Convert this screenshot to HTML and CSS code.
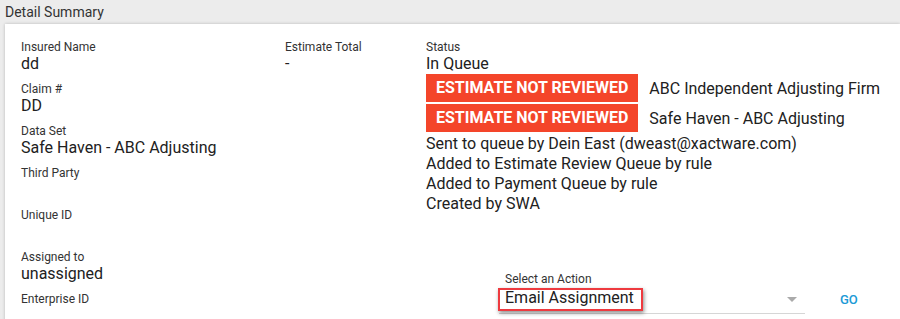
FILE: index.html
```html
<!DOCTYPE html>
<html>
<head>
<meta charset="utf-8">
<link rel="stylesheet" href="styles.css">
</head>
<body>
<div class="page">
  <div class="title">Detail Summary</div>
  <div class="card">
    <div class="col col-left">
      <div class="field"><div class="label">Insured Name</div><div class="value">dd</div></div>
      <div class="field"><div class="label">Claim #</div><div class="value">DD</div></div>
      <div class="field"><div class="label">Data Set</div><div class="value">Safe Haven - ABC Adjusting</div></div>
      <div class="field"><div class="label">Third Party</div><div class="value"></div></div>
      <div class="field"><div class="label">Unique ID</div><div class="value"></div></div>
      <div class="field"><div class="label">Assigned to</div><div class="value">unassigned</div></div>
      <div class="field"><div class="label">Enterprise ID</div><div class="value"></div></div>
    </div>
    <div class="col col-mid">
      <div class="field"><div class="label">Estimate Total</div><div class="value">-</div></div>
    </div>
    <div class="col col-right">
      <div class="field status">
        <div class="label">Status</div>
        <div class="value">In Queue</div>
        <div class="badge-row"><span class="badge">ESTIMATE NOT REVIEWED</span><span class="badge-text">ABC Independent Adjusting Firm</span></div>
        <div class="badge-row"><span class="badge">ESTIMATE NOT REVIEWED</span><span class="badge-text">Safe Haven - ABC Adjusting</span></div>
        <div class="line">Sent to queue by Dein East (dweast@xactware.com)</div>
        <div class="line">Added to Estimate Review Queue by rule</div>
        <div class="line">Added to Payment Queue by rule</div>
        <div class="line">Created by SWA</div>
      </div>
      <div class="action">
        <div class="select-wrap">
          <div class="select-label">Select an Action</div>
          <div class="select">
            <span class="select-value">Email Assignment</span>
            <span class="arrow"></span>
            <span class="highlight"></span>
          </div>
        </div>
        <button class="go">GO</button>
      </div>
    </div>
  </div>
</div>
</body>
</html>
```

FILE: styles.css
```css
html, body {
  margin: 0;
  padding: 0;
  background: #ececec;
  font-family: Roboto, "Liberation Sans", Arial, sans-serif;
  color: #212121;
  overflow: hidden;
}
.page {
  padding: 3px 0 0 5px;
}
.title {
  font-size: 14px;
  line-height: 18px;
  color: #333;
  height: 21px;
}
.card {
  background: #fff;
  box-shadow: 0 0 3px rgba(0,0,0,0.22);
  padding: 15px 0 20px 16px;
  display: flex;
  min-height: 300px;
}
.col-left {
  width: 264px;
}
.col-mid {
  width: 141px;
}
.col-right {
  flex: 1;
  display: flex;
  flex-direction: column;
}
.field {
  margin-bottom: 8px;
}
.label {
  font-size: 12px;
  line-height: 16px;
  color: #333;
}
.value {
  font-size: 16px;
  line-height: 18px;
  min-height: 18px;
  color: #212121;
}
.badge-row {
  display: flex;
  align-items: center;
  height: 30px;
}
.badge {
  background: #f4452a;
  color: #fff;
  font-weight: 700;
  font-size: 16px;
  line-height: 28px;
  height: 28px;
  padding: 0 10px;
  white-space: nowrap;
}
.badge-text {
  margin-left: 11px;
  font-size: 16px;
  color: #212121;
}
.badge-row + .line {
  margin-top: 1px;
}
.line {
  font-size: 16px;
  line-height: 20px;
  color: #212121;
}
.action {
  margin-top: 49px;
  margin-left: 73px;
  display: flex;
  align-items: flex-end;
}
.select-wrap {
  width: 306px;
}
.select-label {
  font-size: 12px;
  line-height: 16px;
  color: #333;
  padding-left: 6px;
}
.select {
  position: relative;
  height: 27px;
  box-sizing: border-box;
  padding-top: 1px;
  border-bottom: 1px solid #d6d6d6;
  display: flex;
  align-items: flex-start;
  padding-left: 6px;
}
.select-value {
  font-size: 16px;
  line-height: 20px;
  flex: 1;
}
.arrow {
  width: 0;
  height: 0;
  border-left: 5px solid transparent;
  border-right: 5px solid transparent;
  border-top: 5px solid #aaa;
  margin-right: 8px;
  margin-top: 9px;
}
.highlight {
  position: absolute;
  left: -1px;
  top: 1px;
  width: 141px;
  height: 19px;
  border: 2px solid #ee3a3f;
  box-shadow: 1px 2px 4px rgba(0,0,0,0.45);
}
.go {
  background: none;
  border: none;
  font-family: inherit;
  font-size: 13px;
  font-weight: 500;
  color: #1c9ad6;
  margin-left: 27px;
  padding: 0 8px;
  height: 28px;
  line-height: 28px;
}
```
